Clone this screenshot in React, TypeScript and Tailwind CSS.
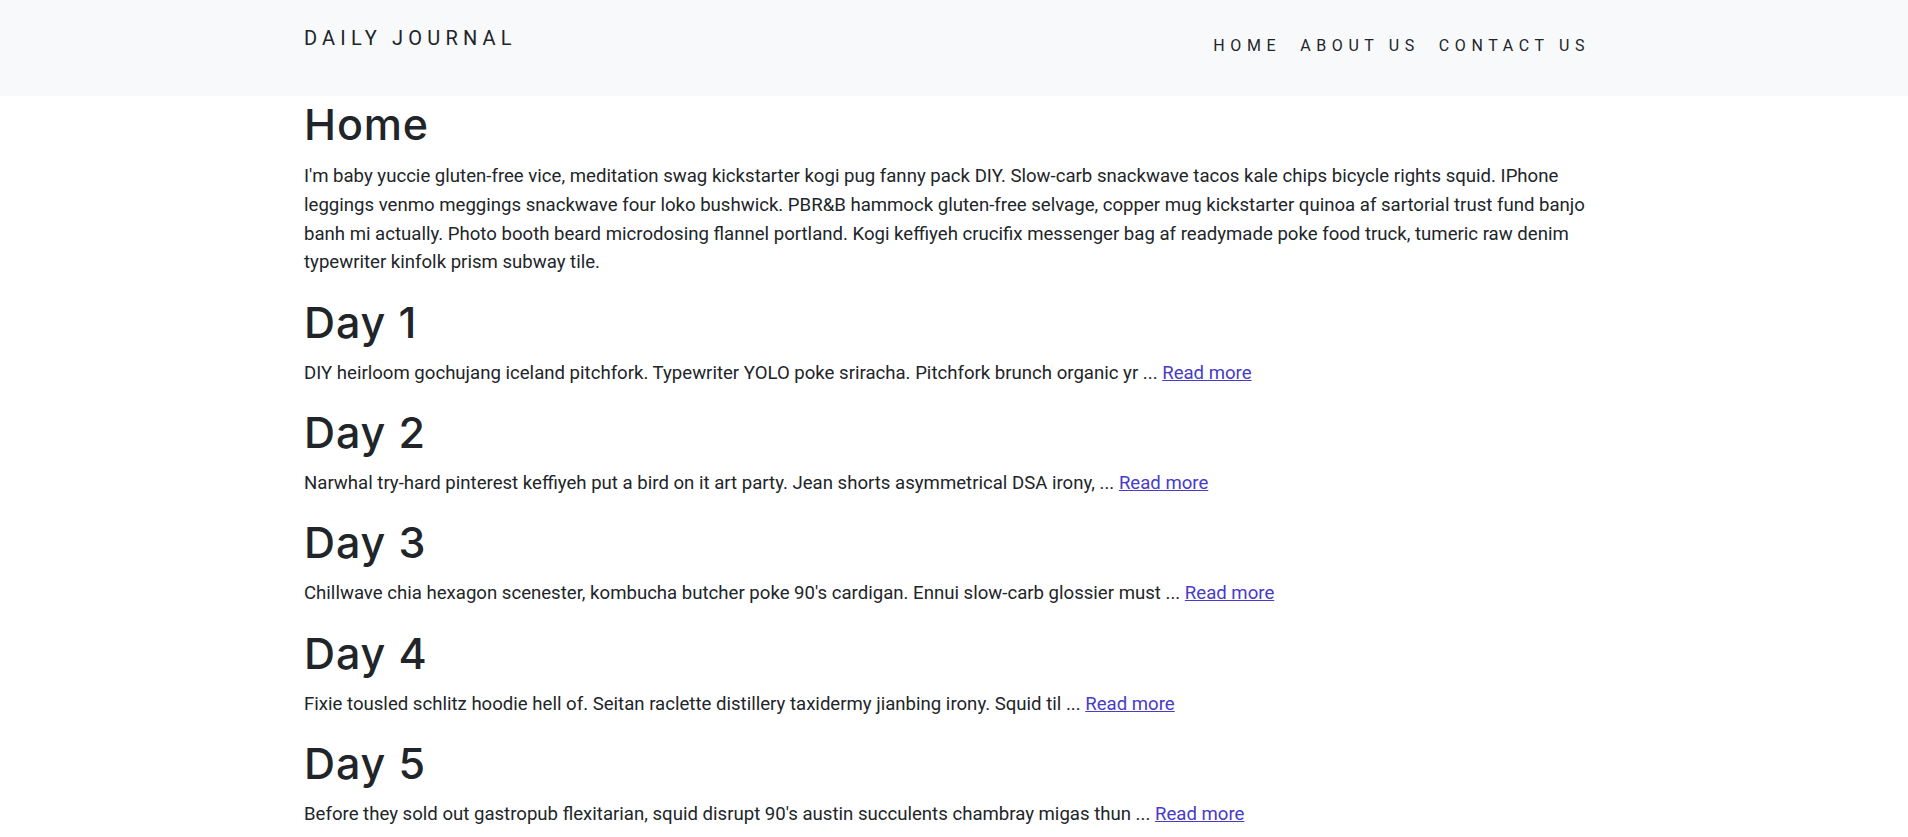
import React from "react";

const posts = [
  {
    title: "Day 1",
    text: "DIY heirloom gochujang iceland pitchfork. Typewriter YOLO poke sriracha. Pitchfork brunch organic yr ...",
  },
  {
    title: "Day 2",
    text: "Narwhal try-hard pinterest keffiyeh put a bird on it art party. Jean shorts asymmetrical DSA irony, ...",
  },
  {
    title: "Day 3",
    text: "Chillwave chia hexagon scenester, kombucha butcher poke 90's cardigan. Ennui slow-carb glossier must ...",
  },
  {
    title: "Day 4",
    text: "Fixie tousled schlitz hoodie hell of. Seitan raclette distillery taxidermy jianbing irony. Squid til ...",
  },
  {
    title: "Day 5",
    text: "Before they sold out gastropub flexitarian, squid disrupt 90's austin succulents chambray migas thun ...",
  },
];

export default function App() {
  return (
    <div className="min-h-screen bg-white text-[#212529] font-['Roboto','Liberation_Sans',sans-serif]">
      <header className="bg-[#f8f9fa] h-[96px]">
        <div className="max-w-[1320px] mx-auto px-[10px] flex justify-between items-start">
          <a href="#" className="mt-[24px] text-[20px] leading-[28px] tracking-[0.26em] text-[#212529]">
            DAILY JOURNAL
          </a>
          <nav className="mt-[35px] mr-[14px] flex gap-[19px] text-[16px] leading-[22px] tracking-[0.35em] text-[#212529]">
            <a href="#">HOME</a>
            <a href="#">ABOUT US</a>
            <a href="#">CONTACT US</a>
          </nav>
        </div>
      </header>

      <main className="max-w-[1320px] mx-auto px-[10px]">
        <h1 className="mt-[4px] text-[43px] leading-[48px] font-medium tracking-[0.02em] font-['Inter','Roboto',sans-serif]">
          Home
        </h1>
        <p className="mt-[14px] text-[18.6px] leading-[28.8px]">
          I'm baby yuccie gluten-free vice, meditation swag kickstarter kogi pug fanny pack DIY. Slow-carb snackwave tacos kale chips bicycle rights squid. IPhone leggings venmo meggings snackwave four loko bushwick. PBR&amp;B hammock gluten-free selvage, copper mug kickstarter quinoa af sartorial trust fund banjo banh mi actually. Photo booth beard microdosing flannel portland. Kogi keffiyeh crucifix messenger bag af readymade poke food truck, tumeric raw denim typewriter kinfolk prism subway tile.
        </p>

        {posts.map((post) => (
          <section key={post.title} className="mt-[20.5px]">
            <h1 className="text-[43px] leading-[48px] font-medium tracking-[0.02em] font-['Inter','Roboto',sans-serif]">
              {post.title}
            </h1>
            <p className="mt-[13px] text-[18.6px] leading-[28.8px]">
              {post.text}{" "}
              <a href="#" className="underline text-[#473bc8]">
                Read more
              </a>
            </p>
          </section>
        ))}
      </main>
    </div>
  );
}
